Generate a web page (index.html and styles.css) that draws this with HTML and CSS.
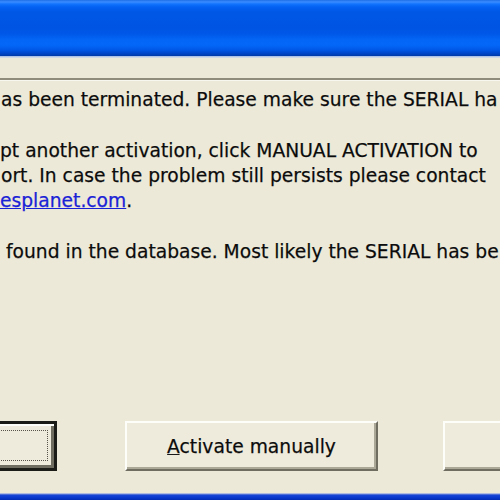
FILE: index.html
```html
<!DOCTYPE html>
<html>
<head>
<meta charset="utf-8">
<link rel="stylesheet" href="styles.css">
</head>
<body>
<div class="window">
  <div class="titlebar"></div>
  <div class="title-edge"></div>
  <div class="top-gap"></div>
  <div class="message">
    <div class="line l1">as been terminated. Please make sure the SERIAL ha</div>
    <div class="line blank">&nbsp;</div>
    <div class="line l3">pt another activation, click MANUAL ACTIVATION to</div>
    <div class="line l4">ort. In case the problem still persists please contact</div>
    <div class="line l5"><a class="link" href="#">esplanet.com</a>.</div>
    <div class="line blank">&nbsp;</div>
    <div class="line l7">found in the database. Most likely the SERIAL has be</div>
  </div>
  <div class="buttons">
    <div class="btn btn-default"><div class="focus"></div></div>
    <div class="btn"><span><u>A</u>ctivate manually</span></div>
    <div class="btn"></div>
  </div>
  <div class="bottom-frame"></div>
</div>
</body>
</html>
```
FILE: styles.css
```css
html, body {
  margin: 0;
  padding: 0;
  width: 500px;
  height: 500px;
  overflow: hidden;
  background: #ece9d8;
}
.window {
  width: 500px;
  height: 500px;
  display: flex;
  flex-direction: column;
  font-family: "DejaVu Sans", sans-serif;
  font-size: 18.7px;
  color: #0a0a0a;
  -webkit-text-stroke: 0.25px #1a1a1a;
}
.titlebar {
  height: 56px;
  flex: none;
  background: linear-gradient(to bottom,
    #1f6ee8 0px, #3a8dff 2px, #1274ff 4px, #0361f2 7px, #0057e6 12px,
    #0054e3 28px, #0058e8 34px, #0466f6 40px, #0467f8 45px, #0057e6 50px,
    #0047cc 53px, #003aa8 56px);
}
.title-edge {
  height: 2px;
  flex: none;
  background: linear-gradient(to bottom, #9fb8e6, #dfe3e8);
}
.top-gap {
  height: 20px;
  flex: none;
}
.message {
  flex: none;
  height: 330px;
  border-top: 2px solid #8f8c7c;
  box-shadow: inset 0 1px 0 #f7f6ef;
  padding-top: 7px;
  box-sizing: border-box;
  line-height: 25.3px;
  white-space: nowrap;
  overflow: hidden;
}
.l1 { margin-left: 1px; }
.l3 { margin-left: 0; }
.l4 { margin-left: 1px; }
.l5 { margin-left: 0; }
.l7 { margin-left: 6px; }
.link {
  color: #1a22d6;
  -webkit-text-stroke: 0.25px #1a22d6;
  text-decoration: underline;
}
.buttons {
  flex: none;
  display: flex;
  align-items: flex-start;
  height: 72px;
  margin-top: 13px;
  overflow: hidden;
}
.btn {
  flex: none;
  width: 253px;
  height: 50px;
  box-sizing: border-box;
  background: #eeebdc;
  border-top: 2px solid #fdfdf9;
  border-left: 2px solid #fdfdf9;
  border-right: 2px solid #6f6d60;
  border-bottom: 2px solid #6f6d60;
  box-shadow: inset -2px -2px 0 #aba897;
  display: flex;
  align-items: center;
  justify-content: center;
  font-size: 18.7px;
  color: #0a0a0a;
}
.btn + .btn { margin-left: 68px; }
.btn + .btn + .btn { margin-left: 65px; }
.btn-default {
  margin-left: -196px;
  border: 3px solid #1b1b17;
  box-shadow: inset 2px 2px 0 #fdfdf9, inset -3px -3px 0 #6f6d60;
  position: relative;
}
.focus {
  position: absolute;
  left: 6px;
  right: 6px;
  top: 6px;
  bottom: 7px;
  border: 1px dotted #55534a;
}
.bottom-frame {
  flex: none;
  height: 7px;
  background: linear-gradient(to bottom, #dfe0ea 0px, #7f95d8 1px, #1946d3 2px, #0a3bd1 4px, #002bb4 7px);
}
```
